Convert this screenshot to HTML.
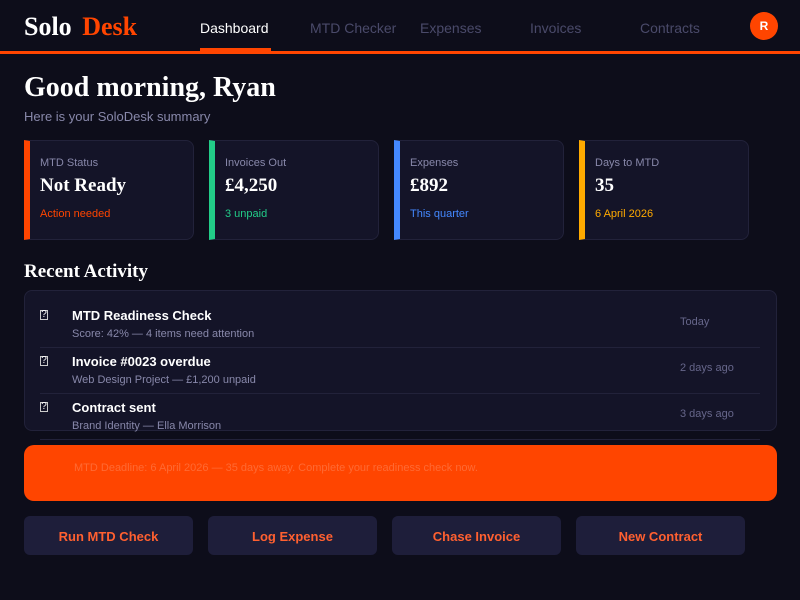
<!DOCTYPE html>
<html><head><style>
*{margin:0;padding:0;box-sizing:border-box}
body{width:800px;height:600px;background:#0d0d1a;font-family:"Liberation Sans",sans-serif;color:#fff;position:relative;overflow:hidden}
.serif{font-family:"Liberation Serif",serif;font-weight:bold}
.nav{position:absolute;left:0;top:0;width:800px;height:54px;border-bottom:3px solid #ff4500}
.logo{position:absolute;left:24px;top:12px;font-size:26px}
.nav a{position:absolute;top:20px;font-size:14px;color:#4a4a6a}
.nav a.act{color:#fff}
.ul{position:absolute;left:200px;top:48px;width:71px;height:3px;background:#ff4500}
.av{position:absolute;left:750px;top:12px;width:28px;height:28px;border-radius:50%;background:#ff4500;font-size:12px;font-weight:bold;text-align:center;line-height:28px}
h1{position:absolute;left:24px;top:72px;font-size:28px}
.sub{position:absolute;left:24px;top:109px;font-size:13px;color:#8888aa}
.card{position:absolute;top:140px;width:170px;height:100px;background:#141428;border:1px solid #22223a;border-left:6px solid;border-radius:0 8px 8px 0;padding:16px 0 0 10px}
.card .l{font-size:11px;color:#8888aa}
.card .v{font-size:19px;margin-top:6px}
.card .s{font-size:11px;margin-top:11px}
h2{position:absolute;left:24px;top:261px;font-size:19px}
.panel{position:absolute;left:24px;top:290px;width:753px;height:141px;background:#141428;border:1px solid #22223a;border-radius:8px}
.row{position:absolute;left:40px;width:720px;height:46px}
.row .ic{position:absolute;left:0;top:8px;font-size:10px;border:1px solid #ccc;width:8px;height:10px;line-height:8px;text-align:center}
.row .t{position:absolute;left:32px;top:6px;font-size:13px;font-weight:bold}
.row .d{position:absolute;left:32px;top:26px;font-size:11px;color:#8888aa}
.row .w{position:absolute;left:640px;top:14px;font-size:11px;color:#66668a}
.sep{position:absolute;left:40px;width:720px;height:1px;background:#22223a}
.ban{position:absolute;left:24px;top:445px;width:753px;height:56px;background:#ff4500;border-radius:10px;font-size:11px;color:#ff6a33;padding:17px 0 0 50px}
.btn{position:absolute;top:516px;width:169px;height:39px;background:#1e1e3a;border-radius:6px;color:#ff6030;font-size:13px;font-weight:bold;text-align:center;line-height:41px}
</style></head><body>
<div class="nav">
<div class="logo serif">Solo <span style="color:#ff4500;margin-left:4px">Desk</span></div>
<a class="act" style="left:200px">Dashboard</a>
<a style="left:310px">MTD Checker</a>
<a style="left:420px">Expenses</a>
<a style="left:530px">Invoices</a>
<a style="left:640px">Contracts</a>
<div class="ul"></div>
<div class="av">R</div>
</div>
<h1 class="serif">Good morning, Ryan</h1>
<div class="sub">Here is your SoloDesk summary</div>
<div class="card" style="left:24px;border-left-color:#ff4500"><div class="l">MTD Status</div><div class="v serif">Not Ready</div><div class="s" style="color:#ff4500">Action needed</div></div>
<div class="card" style="left:209px;border-left-color:#22cc88"><div class="l">Invoices Out</div><div class="v serif">£4,250</div><div class="s" style="color:#22cc88">3 unpaid</div></div>
<div class="card" style="left:394px;border-left-color:#4488ff"><div class="l">Expenses</div><div class="v serif">£892</div><div class="s" style="color:#4488ff">This quarter</div></div>
<div class="card" style="left:579px;border-left-color:#ffaa00"><div class="l">Days to MTD</div><div class="v serif">35</div><div class="s" style="color:#ffaa00">6 April 2026</div></div>
<h2 class="serif">Recent Activity</h2>
<div class="panel"></div>
<div class="row" style="top:302px"><div class="ic">?</div><div class="t">MTD Readiness Check</div><div class="d">Score: 42% — 4 items need attention</div><div class="w">Today</div></div>
<div class="sep" style="top:347px"></div>
<div class="row" style="top:348px"><div class="ic">?</div><div class="t">Invoice #0023 overdue</div><div class="d">Web Design Project — £1,200 unpaid</div><div class="w">2 days ago</div></div>
<div class="sep" style="top:393px"></div>
<div class="row" style="top:394px"><div class="ic">?</div><div class="t">Contract sent</div><div class="d">Brand Identity — Ella Morrison</div><div class="w">3 days ago</div></div>
<div class="sep" style="top:439px"></div>
<div class="ban">MTD Deadline: 6 April 2026 — 35 days away. Complete your readiness check now.</div>
<div class="btn" style="left:24px">Run MTD Check</div>
<div class="btn" style="left:208px">Log Expense</div>
<div class="btn" style="left:392px">Chase Invoice</div>
<div class="btn" style="left:576px">New Contract</div>
</body></html>
